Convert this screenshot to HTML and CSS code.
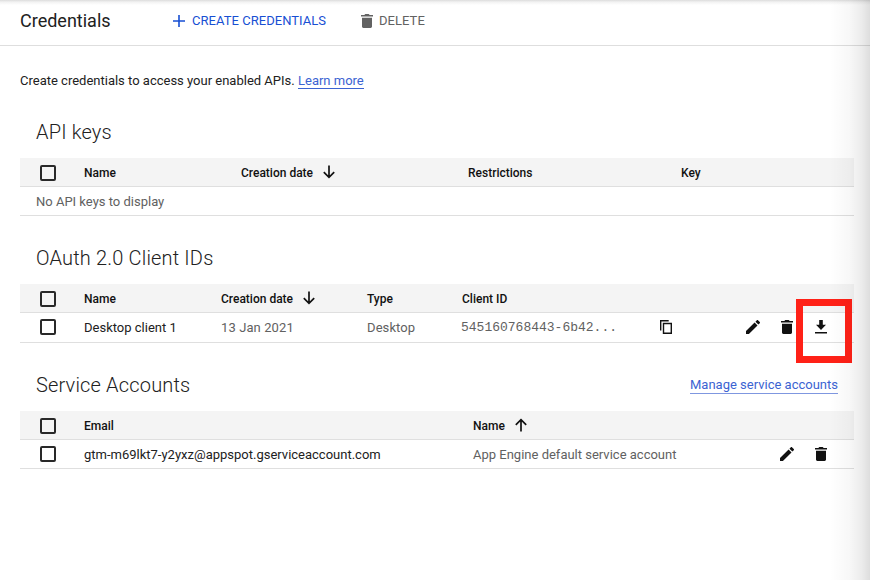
FILE: index.html
```html
<!DOCTYPE html>
<html lang="en">
<head>
<meta charset="utf-8">
<title>Credentials</title>
<link rel="stylesheet" href="styles.css">
</head>
<body>
<svg class="symbols" aria-hidden="true">
  <symbol id="trash" viewBox="0 0 12 14"><path d="M0 1h3.3l1-1h3.4l1 1H12v1.6H0zM1 3.7h10v8.8c0 .8-.6 1.4-1.4 1.4H2.4c-.8 0-1.4-.6-1.4-1.4z"/></symbol>
  <symbol id="pencil" viewBox="3 3 18 18"><path d="M3 17.25V21h3.75L17.81 9.94l-3.75-3.75zM20.71 7.04c.39-.39.39-1.02 0-1.41l-2.34-2.34c-.39-.39-1.02-.39-1.41 0l-1.83 1.83 3.75 3.75z"/></symbol>
  <symbol id="arrow" viewBox="0 0 12 14"><path d="M6 .5v12M.8 7.2 6 12.4l5.2-5.2" fill="none" stroke="currentColor" stroke-width="1.7"/></symbol>
</svg>
<div class="page">
  <header class="topbar">
    <h1>Credentials</h1>
    <button class="action create"><svg class="plus" viewBox="0 0 12 12"><path d="M6 0v12M0 6h12" stroke="currentColor" stroke-width="1.6"/></svg><span>CREATE CREDENTIALS</span></button>
    <button class="action delete"><svg class="trash"><use href="#trash"/></svg><span>DELETE</span></button>
  </header>
  <main>
    <p class="intro"><span>Create credentials to access your enabled APIs.</span><a class="learn">Learn more</a></p>

    <section class="keys">
      <div class="title"><h2>API keys</h2></div>
      <div class="row head"><i class="box"></i><b class="name">Name</b><b class="sort date">Creation date</b><svg class="arrow"><use href="#arrow"/></svg><b class="restrictions">Restrictions</b><b class="key">Key</b></div>
      <div class="row"><span class="empty">No API keys to display</span></div>
    </section>

    <section class="clients">
      <div class="title"><h2 class="oauth">OAuth 2.0 Client IDs</h2></div>
      <div class="row head"><i class="box"></i><b class="name">Name</b><b class="sort date">Creation date</b><svg class="arrow"><use href="#arrow"/></svg><b class="type">Type</b><b class="client">Client ID</b></div>
      <div class="row tall"><i class="box"></i><span class="name dark">Desktop client 1</span><span class="day">13 Jan 2021</span><span class="kind">Desktop</span><span class="mono">545160768443-6b42...</span>
        <svg class="copy" viewBox="0 0 12 14"><path d="M.7 10.5V.7h8M3.5 3.5h7.8v9.8H3.5z" fill="none" stroke="currentColor" stroke-width="1.4"/></svg>
        <div class="tools"><svg class="pencil"><use href="#pencil"/></svg><svg class="trash"><use href="#trash"/></svg><span class="download"><svg viewBox="0 0 12 14"><path d="M4.2 0h3.6v4.7H11L6 10 1 4.7h3.2zM0 12h12v1.6H0z"/></svg></span></div>
      </div>
    </section>

    <section class="accounts">
      <div class="title"><h2 class="service">Service Accounts</h2><a class="manage">Manage service accounts</a></div>
      <div class="row head"><i class="box"></i><b class="name">Email</b><b class="sort">Name</b><svg class="arrow up"><use href="#arrow"/></svg></div>
      <div class="row"><i class="box"></i><span class="name dark email">gtm-m69lkt7-y2yxz@appspot.gserviceaccount.com</span><span class="engine">App Engine default service account</span><div class="tools"><svg class="pencil"><use href="#pencil"/></svg><svg class="trash"><use href="#trash"/></svg></div></div>
    </section>
  </main>
  <div class="edge"></div>
</div>
</body>
</html>
```

FILE: styles.css
```css
*, *::after { box-sizing: border-box; }
body { margin: 0; background: #fff; font: 13px/20px Roboto, sans-serif; color: #212121; }
svg { display: block; fill: currentColor; flex: none; }
h1, h2, p { margin: 0; font-weight: 400; }
.symbols { position: absolute; width: 0; height: 0; }
.page { position: relative; width: 870px; height: 580px; overflow: hidden; }
.topbar { height: 46px; padding: 0 0 4px 20px; display: flex; align-items: center; border-bottom: 1px solid #dedede; background: linear-gradient(#dcdcdc, #f2f2f2 2px, #fff 5px); }
h1 { width: 153px; padding-top: 1px; font-size: 18px; letter-spacing: 0; }
.action { display: flex; align-items: center; padding: 0; border: 0; background: none; font: 13px/20px Roboto, sans-serif; white-space: nowrap; }
.create { width: 188px; gap: 7px; color: #174fd3; letter-spacing: .04px; }
.delete { gap: 6px; color: #626262; letter-spacing: .04px; }
.plus { width: 12px; height: 12px; }
.trash { width: 12px; height: 14px; }
main { padding: 25px 16px 0 20px; }
.intro { display: flex; height: 19px; white-space: nowrap; }
.intro span { width: 278px; }
a { color: #3b63d2; }
.learn { height: 18px; border-bottom: 1px solid #3b63d2; }
section { padding-top: 26px; }
.keys { height: 126px; }
.clients { height: 127px; }
.title { height: 42px; padding: 0 16px; display: flex; align-items: flex-start; justify-content: space-between; }
h2 { font-size: 20px; line-height: 32px; font-weight: 300; letter-spacing: .17px; white-space: nowrap; color: #212121; }
.row { height: 29px; display: flex; align-items: center; border-bottom: 1px solid #dfdfdf; padding-left: 20px; color: #616161; white-space: nowrap; }
.row > span { padding-top: 1px; }
.tall { height: 30px; padding-bottom: 1px; }
.head { padding-top: 2px; background: #f4f4f4; color: #111; font-size: 12px; }
.head b { font-weight: 500; }
.head .arrow { margin-top: -2px; }
.box { flex: none; width: 16px; height: 16px; border: 2px solid #292929; border-radius: 2px; margin-right: 28px; }
.empty { margin-left: -4px; }
.name { flex: none; }
.dark { color: #212121; }
.arrow { width: 12px; height: 14px; color: #111; }
.keys .name { width: 157px; }
.keys .date { width: 82px; }
.restrictions { margin-left: 133px; width: 213px; }
.clients .name { width: 137px; }
.clients .date { width: 82px; }
.type { margin-left: 52px; width: 95px; }
.day { width: 146px; letter-spacing: .1px; }
.kind { width: 94px; letter-spacing: .1px; }
.mono { width: 199px; font-family: "Liberation Mono", monospace; font-size: 13px; }
.row > .mono { padding-top: 2px; }
.copy { width: 12px; height: 14px; color: #111; }
.tools { display: flex; align-items: center; margin-left: auto; padding-right: 26px; gap: 21px; color: #111; }
.accounts .tools { padding-right: 27px; }
.pencil { width: 14px; height: 14px; }
.download { position: relative; width: 14px; height: 14px; }
.download svg { width: 14px; height: 14px; }
.download::after { content: ""; position: absolute; left: -18px; top: -21px; width: 56px; height: 64px; border: 7px solid #ff2117; }
.manage { margin-top: 6px; height: 19px; border-bottom: 1px solid #7f97e0; }
.accounts .name { width: 389px; }
.accounts .sort { width: 42px; }
.up { transform: scaleY(-1); }
.edge { position: absolute; top: 0; right: 0; bottom: 0; width: 40px; pointer-events: none; background: linear-gradient(90deg, #0000, #00000008 50%, #00000014 80%, #0002); }
```
